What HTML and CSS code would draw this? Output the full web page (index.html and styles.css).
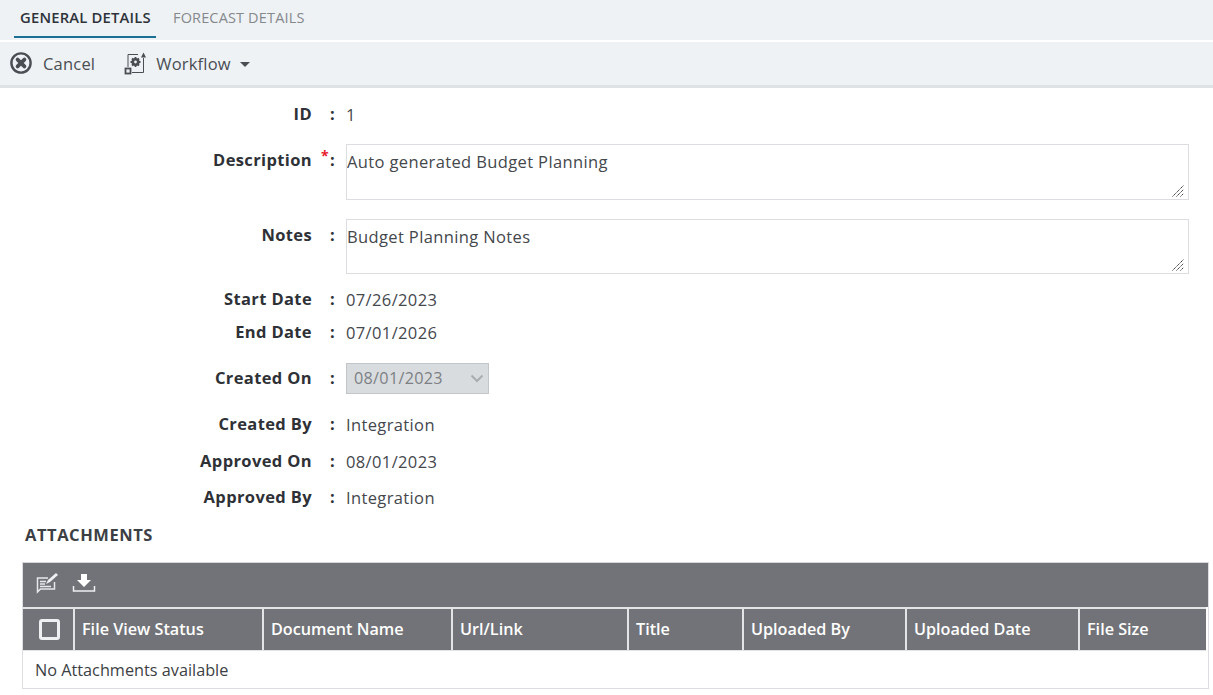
FILE: index.html
```html
<!DOCTYPE html>
<html lang="en">
<head>
<meta charset="utf-8">
<title>General Details</title>
<link rel="stylesheet" href="styles.css">
</head>
<body>
<nav class="tabs">
  <a class="tab tab-active">GENERAL DETAILS</a>
  <a class="tab">FORECAST DETAILS</a>
</nav>
<div class="toolbar">
  <button class="tool tool-cancel">
    <svg class="ico" width="22" height="22" viewBox="0 0 22 22"><circle cx="11" cy="11" r="9.600" fill="none" stroke="#4a4d52" stroke-width="2.400"/><path d="M7.600 7.600l6.800 6.800M14.400 7.600l-6.800 6.800" stroke="#4a4d52" stroke-width="3.800" stroke-linecap="round"/></svg>
    <span>Cancel</span>
  </button>
  <button class="tool tool-wf">
    <svg class="ico" width="24" height="24" viewBox="0 0 24 24" fill="none" stroke="#4a4d52"><path d="M4 16V3.500h10M19.500 7v14.500H8"/><path d="M22 6.500l-2.500-5-2.500 5z" fill="#4a4d52" stroke="none"/><rect x="1.500" y="17.500" width="5" height="5" stroke-width="1.800"/><circle cx="11.500" cy="11" r="2.700" stroke-width="2.600"/><path d="M11.500 6v2.500M11.500 13.500V16M6.500 11H9M14 11h2.500M8 7.500l1.800 1.800M13.200 12.700l1.800 1.800M15 7.500l-1.800 1.800M9.800 12.700L8 14.500" stroke-width="1.800"/></svg>
    <span>Workflow</span><i class="caret"></i>
  </button>
</div>
<main class="form">
  <div class="row r-id"><label>ID</label><b class="colon">:</b><span>1</span></div>
  <div class="row r-desc"><label>Description</label><b class="colon"><em>*</em>:</b>
    <div class="area-wrap a-desc"><textarea class="area">Auto generated Budget Planning</textarea><svg class="grip" width="12" height="12" viewBox="0 0 12 12"><path d="M0.500 11.500l11-11M4.500 11.500l7-7M8.500 11.500l3-3" stroke="#333" stroke-width="1" stroke-dasharray="1.400 .6" fill="none"/></svg></div>
  </div>
  <div class="row r-notes"><label>Notes</label><b class="colon">:</b>
    <div class="area-wrap a-notes"><textarea class="area">Budget Planning Notes</textarea><svg class="grip" width="12" height="12" viewBox="0 0 12 12"><path d="M0.500 11.500l11-11M4.500 11.500l7-7M8.500 11.500l3-3" stroke="#333" stroke-width="1" stroke-dasharray="1.400 .6" fill="none"/></svg></div>
  </div>
  <div class="row r-start"><label>Start Date</label><b class="colon">:</b><span>07/26/2023</span></div>
  <div class="row r-end"><label>End Date</label><b class="colon">:</b><span>07/01/2026</span></div>
  <div class="row r-created"><label>Created On</label><b class="colon">:</b>
    <div class="picker"><span>08/01/2023</span><svg width="14" height="9" viewBox="0 0 14 9"><path d="M1.500 1.500L7 7l5.500-5.500" fill="none" stroke="#a9adb1" stroke-width="2"/></svg></div>
  </div>
  <div class="row r-by"><label>Created By</label><b class="colon">:</b><span>Integration</span></div>
  <div class="row r-appr"><label>Approved On</label><b class="colon">:</b><span>08/01/2023</span></div>
  <div class="row r-apby"><label>Approved By</label><b class="colon">:</b><span>Integration</span></div>
</main>
<section class="attach">
  <h2>ATTACHMENTS</h2>
  <div class="grid">
    <div class="grid-tools">
      <svg width="24" height="22" viewBox="0 0 24 22" fill="none" stroke="#e6e8ea"><path d="M13 6H2.500v14l3-3H19.500V10" stroke-width="1.500"/><path d="M5 9.500h6M5 12h5M5 14.500h11" stroke-width="1.500"/><path d="M11 12l2-4 8-7 2 2-8 7z" fill="#eef0f2" stroke="none"/></svg>
      <svg width="24" height="22" viewBox="0 0 24 22"><path d="M9 2h6v6h4l-7 7-7-7h4z" fill="#fff"/><path d="M1.500 14v5h21v-5" fill="none" stroke="#eef0f2" stroke-width="1.500"/></svg>
    </div>
    <table>
      <colgroup><col class="c0"><col class="c1"><col class="c2"><col class="c3"><col class="c4"><col class="c5"><col class="c6"><col class="c7"></colgroup>
      <thead><tr>
        <th class="th-check"><i class="check"></i></th>
        <th>File View Status</th><th>Document Name</th><th>Url/Link</th><th>Title</th><th>Uploaded By</th><th>Uploaded Date</th><th>File Size</th>
      </tr></thead>
      <tbody><tr><td colspan="8">No Attachments available</td></tr></tbody>
    </table>
  </div>
</section>
</body>
</html>
```
FILE: styles.css
```css
* { box-sizing: border-box; }
html, body { margin: 0; padding: 0; }
body { width: 1213px; height: 695px; overflow: hidden; background: #fff; color: #44474c; font-family: "Open Sans", sans-serif; font-size: 16.500px; letter-spacing: .37px; }

.tabs { height: 41px; background: #eef2f5; display: flex; padding: 0 0 0 14px; border-bottom: 1px solid #fff; }
.tab { height: 38px; padding: 0 5px; margin-right: 12px; font-size: 14.500px; letter-spacing: .15px; line-height: 35px; font-weight: 400; color: #85888c; white-space: nowrap; }
.tab-active { font-size: 14.800px; letter-spacing: .2px; font-weight: 600; color: #2e333a; border-bottom: 2px solid #1b6f93; width: 142px; padding-left: 6px; }

.toolbar { height: 47px; background: #eef2f5; border-top: 1px solid #fff; border-bottom: 3px solid #dfe2e4; display: flex; align-items: center; padding: 0 0 1px 10px; }
.tool { border: 0; background: none; padding: 0; display: flex; align-items: center; font: inherit; font-size: 16.500px; letter-spacing: .2px; color: #4a4d52; font-weight: 500; }
.tool-cancel .ico { margin-right: 11px; }
.tool-wf { margin-left: 29px; }
.tool-wf .ico { margin-right: 8px; }
.caret { margin-left: 9px; margin-top: 3px; border: 5px solid transparent; border-top-color: #4a4d52; border-bottom: 0; }

.form { padding-top: 9px; display: flex; flex-direction: column; }
.row { display: grid; grid-template-columns: 312px 34px 1fr; align-items: start; }
.row label { text-align: right; font-weight: 700; color: #2e3136; line-height: 34px; }
.row > span { line-height: 36px; }
.colon { font-weight: 700; color: #2e3136; line-height: 34px; text-align: right; padding-right: 11px; position: relative; }
.colon em { position: absolute; left: 9px; top: -4px; color: #e8202a; font-size: 14px; font-style: normal; font-weight: 700; }
.r-id { height: 34px; }
.r-desc { height: 56px; margin-top: 13px; }
.r-notes { height: 55px; margin-top: 19px; }
.r-start { height: 34px; margin-top: 8px; }
.r-end { height: 34px; margin-top: -1px; }
.r-created { height: 32px; margin-top: 14px; }
.r-created label, .r-created .colon { line-height: 29px; }
.r-by { height: 34px; margin-top: 12px; }
.r-appr { height: 34px; margin-top: 3px; }
.r-apby { height: 34px; margin-top: 2px; }
.r-desc label, .r-notes label, .r-desc .colon, .r-notes .colon { line-height: 32px; }

.area-wrap { position: relative; width: 843px; }
.a-desc { height: 56px; }
.a-notes { height: 55px; }
.area { display: block; width: 100%; height: 100%; margin: 0; border: 1px solid #dcdde0; border-radius: 0; padding: 5px 0 0 0; font: inherit; letter-spacing: inherit; color: #44474c; line-height: 24px; outline: 0; resize: none; overflow: hidden; }
.grip { position: absolute; right: 5px; bottom: 3px; }

.picker { width: 143px; height: 31px; background: #d9dcde; border: 1px solid #c3c6c9; display: flex; align-items: center; justify-content: space-between; padding: 0 4px 0 7px; }
.picker span { color: #7c8085; line-height: 27px; font-size: 16.200px; letter-spacing: .3px; }

.attach { margin-top: 10px; padding-left: 22px; }
.attach h2 { margin: 0; padding-left: 3px; font-size: 16.500px; letter-spacing: .55px; line-height: 22px; font-weight: 700; color: #3c3f44; }
.grid { margin-top: 16px; width: 1187px; border: 1px solid #dcdde0; border-top-color: #d6d7d9; }
.grid-tools { height: 44px; background: #727378; display: flex; align-items: center; gap: 13px; padding: 0 0 4px 12px; }
table { border-collapse: separate; border-spacing: 0; table-layout: fixed; width: 1183px; }
.c0 { width: 52px; } .c1 { width: 189px; } .c2 { width: 189px; } .c3 { width: 176px; } .c4 { width: 115px; } .c5 { width: 163px; } .c6 { width: 173px; } .c7 { width: 126px; }
th { height: 44px; padding: 0 0 2px 7px; background: #727378; color: #fff; text-align: left; font-weight: 600; font-size: 16.200px; letter-spacing: 0; border-top: 2px solid #e3e4e6; border-right: 2px solid #e3e4e6; border-bottom: 1px solid #e3e4e6; white-space: nowrap; }
th:last-child { border-right: 0; }
.th-check { padding: 0 0 0 16px; }
.check { display: block; width: 21px; height: 21px; border: 3px solid #eef0f2; border-radius: 3px; }
td { height: 37px; padding: 1px 0 0 12px; color: #3c3f44; font-size: 16.250px; letter-spacing: 0; }
```
